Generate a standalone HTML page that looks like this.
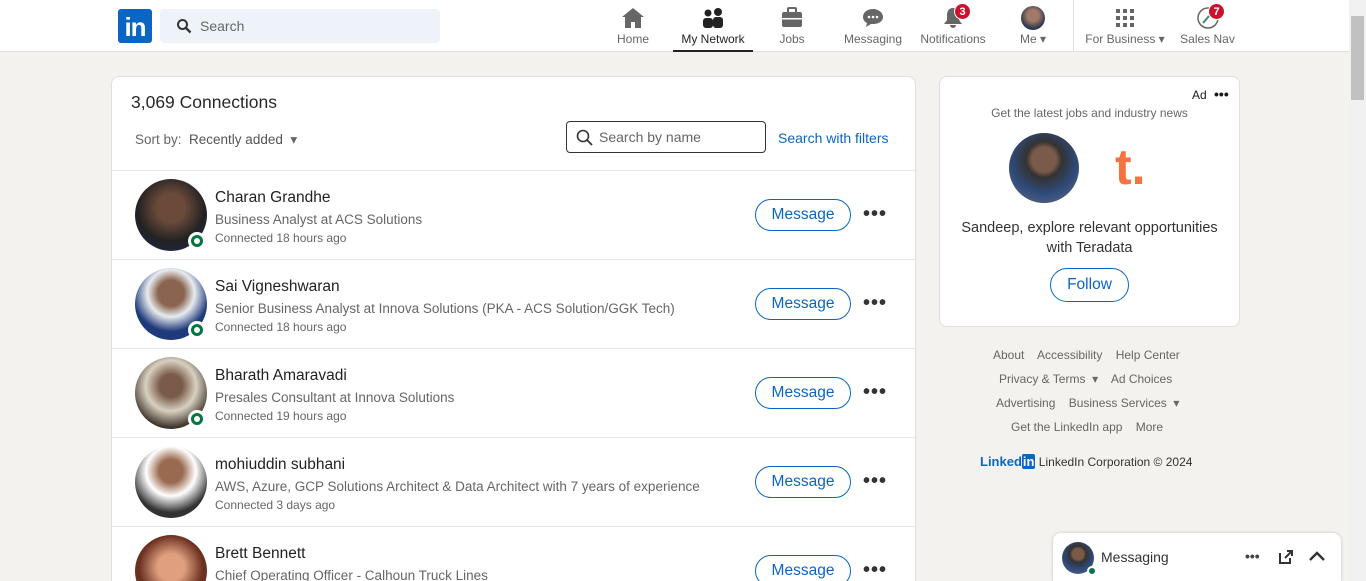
<!DOCTYPE html>
<html><head><meta charset="utf-8"><style>
*{box-sizing:border-box;margin:0;padding:0}
html,body{width:1366px;height:581px;overflow:hidden}
body{background:#f4f2ee;font-family:"Liberation Sans",sans-serif;color:rgba(0,0,0,.9);position:relative}
.hdr{position:absolute;left:0;top:0;width:1349px;height:52px;background:#fff;border-bottom:1px solid #e0dfdc}
.logo{position:absolute;left:118px;top:9px;width:34px;height:34px;background:#0a66c2;border-radius:3px;color:#fff;font-weight:bold;font-size:26px;line-height:36px;text-align:center;letter-spacing:-1px}
.search{position:absolute;left:160px;top:9px;width:280px;height:34px;background:#edf3f8;border-radius:4px;font-size:14px;color:#666;line-height:34px;padding-left:40px}
.nav{position:absolute;top:0;height:52px;text-align:center;font-size:12px;color:#666}
.nav .ic{height:22px;margin:7px auto 3px;display:flex;justify-content:center;align-items:center}
.nav .t{white-space:nowrap}
.badge{position:absolute;top:3px;width:17px;height:17px;border-radius:50%;background:#cb112d;color:#fff;font-size:11px;font-weight:bold;line-height:17px;text-align:center;border:1px solid #fff}
.card{position:absolute;background:#fff;border:1px solid #e0dfdc;border-radius:8px;overflow:hidden}
.row{position:absolute;left:0;width:803px;height:89px;border-top:1px solid #e8e8e8}
.av{position:absolute;left:23px;top:8px;width:72px;height:72px;border-radius:50%}
.dot{position:absolute;left:76px;top:61px;width:18px;height:18px;border-radius:50%;background:#fff;padding:3px}
.dot i{display:block;width:12px;height:12px;border-radius:50%;border:3px solid #057642;background:#fff}
.nm{position:absolute;left:103px;top:18px;font-size:15.5px;color:#222}
.ti{position:absolute;left:103px;top:41px;font-size:13.5px;color:#666}
.tm{position:absolute;left:103px;top:60px;font-size:12px;color:#666}
.btn{position:absolute;left:643px;top:28px;width:96px;height:32px;border:1px solid #0a66c2;border-radius:16px;color:#0a66c2;font-size:15.5px;text-align:center;line-height:30px}
.more{position:absolute;left:751px;top:31px;font-size:20px;font-weight:bold;letter-spacing:1px;color:#333;line-height:24px}
.ft{position:absolute;font-size:12px;color:#666;white-space:nowrap}
</style></head><body>
<div class="hdr">
<div class="logo">in</div>
<div class="search"><svg style="position:absolute;left:16px;top:9px" width="16" height="16" viewBox="0 0 16 16"><circle cx="6.5" cy="6.5" r="4.5" fill="none" stroke="#333" stroke-width="2"/><path d="M10 10l4.5 4.5" stroke="#333" stroke-width="2.4"/></svg>Search</div>
<div class="nav" style="left:611px;width:44px"><div class="ic"><svg width="24" height="22" viewBox="0 0 24 22"><path d="M12 1L1 10h3v11h6v-6h4v6h6V10h3z" fill="#666"/></svg></div><div class="t">Home</div></div>
<div class="nav" style="left:673px;width:80px;color:#222;border-bottom:2px solid #222"><div class="ic"><svg width="24" height="22" viewBox="0 0 24 22"><circle cx="7" cy="6" r="3.5" fill="#222"/><circle cx="17" cy="5" r="4" fill="#222"/><rect x="2" y="11" width="10" height="10" rx="3" fill="#222"/><rect x="12" y="10" width="10" height="11" rx="3" fill="#222"/></svg></div><div class="t">My Network</div></div>
<div class="nav" style="left:772px;width:40px"><div class="ic"><svg width="24" height="22" viewBox="0 0 24 22"><rect x="2" y="5" width="20" height="15" rx="2" fill="#666"/><rect x="8" y="1" width="8" height="5" rx="1" fill="none" stroke="#666" stroke-width="2"/><rect x="2" y="11" width="20" height="1.5" fill="#fff"/></svg></div><div class="t">Jobs</div></div>
<div class="nav" style="left:843px;width:60px"><div class="ic"><svg width="24" height="22" viewBox="0 0 24 22"><path d="M12 2C6 2 2 5.5 2 10c0 3 2 5 4 6l-1 4 5-3h2c6 0 10-3 10-7S18 2 12 2z" fill="#666"/><circle cx="8" cy="10" r="1.3" fill="#fff"/><circle cx="12" cy="10" r="1.3" fill="#fff"/><circle cx="16" cy="10" r="1.3" fill="#fff"/></svg></div><div class="t">Messaging</div></div>
<div class="nav" style="left:918px;width:70px"><div class="ic"><svg width="24" height="22" viewBox="0 0 24 22"><path d="M12 1c-4 0-6 3-6 7v5l-3 4h18l-3-4V8c0-4-2-7-6-7zM9 18h6a3 3 0 01-6 0z" fill="#666"/></svg></div><div class="t">Notifications</div><div class="badge" style="left:36px">3</div></div>
<div class="nav" style="left:1013px;width:40px"><div class="ic"><div style="width:24px;height:24px;border-radius:50%;background:radial-gradient(circle at 50% 40%,#a07a66 30%,#2a3550 70%)"></div></div><div class="t">Me ▾</div></div>
<div style="position:absolute;left:1073px;top:0;width:1px;height:52px;background:#e0dfdc"></div>
<div class="nav" style="left:1084px;width:82px"><div class="ic"><svg width="22" height="22" viewBox="0 0 22 22" fill="#666"><rect x="2" y="2" width="4" height="4"/><rect x="9" y="2" width="4" height="4"/><rect x="16" y="2" width="4" height="4"/><rect x="2" y="9" width="4" height="4"/><rect x="9" y="9" width="4" height="4"/><rect x="16" y="9" width="4" height="4"/><rect x="2" y="16" width="4" height="4"/><rect x="9" y="16" width="4" height="4"/><rect x="16" y="16" width="4" height="4"/></svg></div><div class="t">For Business ▾</div></div>
<div class="nav" style="left:1180px;width:55px"><div class="ic"><svg width="24" height="24" viewBox="0 0 24 24"><circle cx="12" cy="12" r="10" fill="none" stroke="#666" stroke-width="1.5"/><path d="M7 17l6-7" stroke="#3a8a6a" stroke-width="2"/></svg></div><div class="t">Sales Nav</div><div class="badge" style="left:28px">7</div></div>
</div>

<div class="card" style="left:111px;top:76px;width:805px;height:505px;border-bottom:none;border-radius:8px 8px 0 0">
<div style="position:absolute;left:19px;top:15px;font-size:17.5px;color:rgba(0,0,0,.85)">3,069 Connections</div>
<div style="position:absolute;left:23px;top:55px;font-size:13.5px;color:#666">Sort by: &nbsp;<span style="color:#555">Recently added</span> &nbsp;▾</div>
<div style="position:absolute;left:454px;top:44px;width:200px;height:32px;border:1px solid #333;border-radius:4px;font-size:14px;color:#666;line-height:30px;padding-left:32px"><svg style="position:absolute;left:9px;top:7px" width="17" height="17" viewBox="0 0 17 17"><circle cx="7" cy="7" r="5.5" fill="none" stroke="#333" stroke-width="1.6"/><path d="M11 11l5 5" stroke="#333" stroke-width="1.8"/></svg>Search by name</div>
<div style="position:absolute;left:666px;top:53px;font-size:14px;color:#0a66c2">Search with filters</div>
<div class="row" style="top:93px"><div class="av" style="background:radial-gradient(circle at 50% 40%,#6b4a3a 25%,#222 60%,#1a2a5a)"></div><div class="dot"><i></i></div><div class="nm">Charan Grandhe</div><div class="ti">Business Analyst at ACS Solutions</div><div class="tm">Connected 18 hours ago</div><div class="btn">Message</div><div class="more">•••</div></div>
<div class="row" style="top:182px"><div class="av" style="background:radial-gradient(circle at 50% 35%,#8a6450 22%,#e8ecf0 40%,#1f3a7a 65%)"></div><div class="dot"><i></i></div><div class="nm">Sai Vigneshwaran</div><div class="ti">Senior Business Analyst at Innova Solutions (PKA - ACS Solution/GGK Tech)</div><div class="tm">Connected 18 hours ago</div><div class="btn">Message</div><div class="more">•••</div></div>
<div class="row" style="top:271px"><div class="av" style="background:radial-gradient(circle at 50% 40%,#7a5a48 20%,#d8d0c0 45%,#3a3028 75%)"></div><div class="dot"><i></i></div><div class="nm">Bharath Amaravadi</div><div class="ti">Presales Consultant at Innova Solutions</div><div class="tm">Connected 19 hours ago</div><div class="btn">Message</div><div class="more">•••</div></div>
<div class="row" style="top:360px"><div class="av" style="background:radial-gradient(circle at 50% 35%,#9a6a50 20%,#fff 42%,#333 70%)"></div><div class="nm">mohiuddin subhani</div><div class="ti">AWS, Azure, GCP Solutions Architect &amp; Data Architect with 7 years of experience</div><div class="tm">Connected 3 days ago</div><div class="btn">Message</div><div class="more">•••</div></div>
<div class="row" style="top:449px"><div class="av" style="background:radial-gradient(circle at 50% 45%,#e0a080 25%,#6a3020 60%)"></div><div class="nm">Brett Bennett</div><div class="ti">Chief Operating Officer - Calhoun Truck Lines</div><div class="btn">Message</div><div class="more">•••</div></div>
</div>

<div class="card" style="left:939px;top:76px;width:301px;height:251px">
<div style="position:absolute;left:252px;top:9px;font-size:12px">Ad <b style="font-size:14px;margin-left:4px">•••</b></div>
<div style="position:absolute;left:0;width:100%;top:29px;text-align:center;font-size:12px;color:#666">Get the latest jobs and industry news</div>
<div style="position:absolute;left:69px;top:56px;width:70px;height:70px;border-radius:50%;background:radial-gradient(circle at 50% 38%,#7a5a48 22%,#333 32%,#2f4a7a 60%,#6a7080)"></div>
<div style="position:absolute;left:175px;top:60px;font-size:50px;font-weight:bold;color:#f37440;line-height:60px">t.</div>
<div style="position:absolute;left:0;width:100%;top:141px;text-align:center;font-size:14.5px;line-height:20px;color:#333">Sandeep, explore relevant opportunities<br>with Teradata</div>
<div style="position:absolute;left:110px;top:191px;width:79px;height:34px;border:1px solid #0a66c2;border-radius:17px;text-align:center;line-height:32px;font-size:15.5px;color:#0a66c2">Follow</div>
</div>

<div class="ft" style="left:993px;top:348px">About &nbsp;&nbsp; Accessibility &nbsp;&nbsp; Help Center</div>
<div class="ft" style="left:999px;top:372px">Privacy &amp; Terms &nbsp;▾ &nbsp;&nbsp; Ad Choices</div>
<div class="ft" style="left:996px;top:396px">Advertising &nbsp;&nbsp; Business Services &nbsp;▾</div>
<div class="ft" style="left:1011px;top:420px">Get the LinkedIn app &nbsp;&nbsp; More</div>
<div class="ft" style="left:980px;top:454px;color:#333"><b style="color:#0a66c2;font-size:13px">Linked<span style="background:#0a66c2;color:#fff;padding:0 1px;border-radius:2px">in</span></b> LinkedIn Corporation © 2024</div>

<div style="position:absolute;left:1053px;top:533px;width:288px;height:48px;background:#fff;border-radius:8px 8px 0 0;box-shadow:0 0 3px rgba(0,0,0,.2)">
<div style="position:absolute;left:9px;top:9px;width:32px;height:32px;border-radius:50%;background:radial-gradient(circle at 50% 38%,#7a5a48 22%,#333 32%,#2f4a7a 60%,#6a7080)"></div>
<div style="position:absolute;left:34px;top:33px;width:10px;height:10px;border-radius:50%;background:#057642;border:2px solid #fff"></div>
<div style="position:absolute;left:48px;top:16px;font-size:14px;color:#333">Messaging</div>
<div style="position:absolute;left:192px;top:15px;font-size:14px;font-weight:bold;color:#444">•••</div>
<svg style="position:absolute;left:225px;top:16px" width="16" height="16" viewBox="0 0 16 16"><path d="M2 4v10h10V9M9 2h5v5M14 2L7 9" fill="none" stroke="#333" stroke-width="2"/></svg>
<svg style="position:absolute;left:255px;top:17px" width="18" height="12" viewBox="0 0 18 12"><path d="M2 10l7-7 7 7" fill="none" stroke="#333" stroke-width="2.4"/></svg>
</div>

<div style="position:absolute;left:1349px;top:0;width:17px;height:581px;background:#f1f1f1"><div style="position:absolute;left:2px;top:16px;width:13px;height:84px;background:#c1c1c1"></div></div>
</body></html>
